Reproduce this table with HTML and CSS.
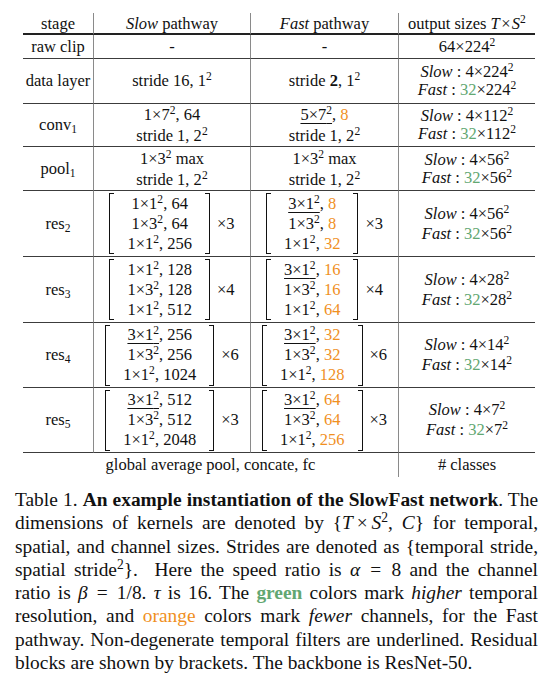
FILE: index.html
```html
<!DOCTYPE html>
<html lang="en">
<head>
    <meta charset="UTF-8">
    <meta name="viewport" content="width=device-width, initial-scale=1.0">
    <title>SlowFast Table 1</title>
    <link rel="stylesheet" href="styles.css">
</head>
<body>
    <div class="tbl">
        <!-- header -->
        <div class="c head"><span>stage</span></div>
        <div class="c head v"><span><i>Slow</i> pathway</span></div>
        <div class="c head v"><span><i>Fast</i> pathway</span></div>
        <div class="c head v"><span>output sizes <i>T</i>&#8202;×&#8202;<i>S</i><sup>2</sup></span></div>

        <!-- raw clip -->
        <div class="c"><span>raw clip</span></div>
        <div class="c v"><span>-</span></div>
        <div class="c v"><span>-</span></div>
        <div class="c v"><span>64×224<sup>2</sup></span></div>

        <!-- data layer -->
        <div class="c"><span>data layer</span></div>
        <div class="c v"><span>stride 16, 1<sup>2</sup></span></div>
        <div class="c v"><span>stride <b>2</b>, 1<sup>2</sup></span></div>
        <div class="c v out">
            <div><i>Slow</i> : 4×224<sup>2</sup></div>
            <div><i>Fast</i> : <span class="g">32</span>×224<sup>2</sup></div>
        </div>

        <!-- conv1 -->
        <div class="c"><span>conv<sub>1</sub></span></div>
        <div class="c v two">
            <div>1×7<sup>2</sup>, 64</div>
            <div>stride 1, 2<sup>2</sup></div>
        </div>
        <div class="c v two">
            <div><span class="ul">5×7<sup>2</sup></span>, <span class="o">8</span></div>
            <div>stride 1, 2<sup>2</sup></div>
        </div>
        <div class="c v out">
            <div><i>Slow</i> : 4×112<sup>2</sup></div>
            <div><i>Fast</i> : <span class="g">32</span>×112<sup>2</sup></div>
        </div>

        <!-- pool1 -->
        <div class="c"><span>pool<sub>1</sub></span></div>
        <div class="c v two">
            <div>1×3<sup>2</sup> max</div>
            <div>stride 1, 2<sup>2</sup></div>
        </div>
        <div class="c v two">
            <div>1×3<sup>2</sup> max</div>
            <div>stride 1, 2<sup>2</sup></div>
        </div>
        <div class="c v out">
            <div><i>Slow</i> : 4×56<sup>2</sup></div>
            <div><i>Fast</i> : <span class="g">32</span>×56<sup>2</sup></div>
        </div>

        <!-- res2 -->
        <div class="c"><span>res<sub>2</sub></span></div>
        <div class="c v">
            <div class="blk">
                <span class="brk left"></span>
                <div class="lines">
                    <div>1×1<sup>2</sup>, 64</div>
                    <div>1×3<sup>2</sup>, 64</div>
                    <div>1×1<sup>2</sup>, 256</div>
                </div>
                <span class="brk right"></span>
                <span class="rep">×3</span>
            </div>
        </div>
        <div class="c v">
            <div class="blk">
                <span class="brk left"></span>
                <div class="lines">
                    <div><span class="ul">3×1<sup>2</sup></span>, <span class="o">8</span></div>
                    <div>1×3<sup>2</sup>, <span class="o">8</span></div>
                    <div>1×1<sup>2</sup>, <span class="o">32</span></div>
                </div>
                <span class="brk right"></span>
                <span class="rep">×3</span>
            </div>
        </div>
        <div class="c v out res">
            <div><i>Slow</i> : 4×56<sup>2</sup></div>
            <div><i>Fast</i> : <span class="g">32</span>×56<sup>2</sup></div>
        </div>

        <!-- res3 -->
        <div class="c"><span>res<sub>3</sub></span></div>
        <div class="c v">
            <div class="blk">
                <span class="brk left"></span>
                <div class="lines">
                    <div>1×1<sup>2</sup>, 128</div>
                    <div>1×3<sup>2</sup>, 128</div>
                    <div>1×1<sup>2</sup>, 512</div>
                </div>
                <span class="brk right"></span>
                <span class="rep">×4</span>
            </div>
        </div>
        <div class="c v">
            <div class="blk">
                <span class="brk left"></span>
                <div class="lines">
                    <div><span class="ul">3×1<sup>2</sup></span>, <span class="o">16</span></div>
                    <div>1×3<sup>2</sup>, <span class="o">16</span></div>
                    <div>1×1<sup>2</sup>, <span class="o">64</span></div>
                </div>
                <span class="brk right"></span>
                <span class="rep">×4</span>
            </div>
        </div>
        <div class="c v out res">
            <div><i>Slow</i> : 4×28<sup>2</sup></div>
            <div><i>Fast</i> : <span class="g">32</span>×28<sup>2</sup></div>
        </div>

        <!-- res4 -->
        <div class="c"><span>res<sub>4</sub></span></div>
        <div class="c v">
            <div class="blk">
                <span class="brk left"></span>
                <div class="lines">
                    <div><span class="ul">3×1<sup>2</sup></span>, 256</div>
                    <div>1×3<sup>2</sup>, 256</div>
                    <div>1×1<sup>2</sup>, 1024</div>
                </div>
                <span class="brk right"></span>
                <span class="rep">×6</span>
            </div>
        </div>
        <div class="c v">
            <div class="blk">
                <span class="brk left"></span>
                <div class="lines">
                    <div><span class="ul">3×1<sup>2</sup></span>, <span class="o">32</span></div>
                    <div>1×3<sup>2</sup>, <span class="o">32</span></div>
                    <div>1×1<sup>2</sup>, <span class="o">128</span></div>
                </div>
                <span class="brk right"></span>
                <span class="rep">×6</span>
            </div>
        </div>
        <div class="c v out res">
            <div><i>Slow</i> : 4×14<sup>2</sup></div>
            <div><i>Fast</i> : <span class="g">32</span>×14<sup>2</sup></div>
        </div>

        <!-- res5 -->
        <div class="c"><span>res<sub>5</sub></span></div>
        <div class="c v">
            <div class="blk">
                <span class="brk left"></span>
                <div class="lines">
                    <div><span class="ul">3×1<sup>2</sup></span>, 512</div>
                    <div>1×3<sup>2</sup>, 512</div>
                    <div>1×1<sup>2</sup>, 2048</div>
                </div>
                <span class="brk right"></span>
                <span class="rep">×3</span>
            </div>
        </div>
        <div class="c v">
            <div class="blk">
                <span class="brk left"></span>
                <div class="lines">
                    <div><span class="ul">3×1<sup>2</sup></span>, <span class="o">64</span></div>
                    <div>1×3<sup>2</sup>, <span class="o">64</span></div>
                    <div>1×1<sup>2</sup>, <span class="o">256</span></div>
                </div>
                <span class="brk right"></span>
                <span class="rep">×3</span>
            </div>
        </div>
        <div class="c v out res">
            <div><i>Slow</i> : 4×7<sup>2</sup></div>
            <div><i>Fast</i> : <span class="g">32</span>×7<sup>2</sup></div>
        </div>

        <!-- last row -->
        <div class="c last wide"><span>global average pool, concate, fc</span></div>
        <div class="c last v"><span># classes</span></div>
    </div>

    <p class="caption">
        <span class="ln">Table 1. <b>An example instantiation of the SlowFast network</b>. The</span>
        <span class="ln">dimensions of kernels are denoted by {<i>T</i>&#8201;×&#8201;<i>S</i><sup>2</sup>, <i>C</i>} for temporal,</span>
        <span class="ln">spatial, and channel sizes. Strides are denoted as {temporal stride,</span>
        <span class="ln">spatial stride<sup>2</sup>}. &nbsp;Here the speed ratio is <i>α</i> <span class="eq">=</span> 8 and the channel</span>
        <span class="ln">ratio is <i>β</i> <span class="eq">=</span> 1/8. <i>τ</i> is 16. The <b class="g">green</b> colors mark <i>higher</i> temporal</span>
        <span class="ln">resolution, and <span class="o">orange</span> colors mark <i>fewer</i> channels, for the Fast</span>
        <span class="ln">pathway. Non-degenerate temporal filters are underlined. Residual</span>
        <span class="ln end">blocks are shown by brackets. The backbone is ResNet-50.</span>
    </p>
</body>
</html>
```

FILE: styles.css
```css
body {
    margin: 0;
    background: #fff;
    color: #111;
    font-family: "Liberation Serif", "Times New Roman", serif;
}

sup {
    font-size: 0.7em;
    line-height: 0;
    vertical-align: 0.5em;
}

sub {
    font-size: 0.7em;
    line-height: 0;
    vertical-align: -0.3em;
}

.g {
    color: #62a772;
}

.o {
    color: #f0901f;
}

/* table */
.tbl {
    display: grid;
    grid-template-columns: 70px 157px 148px 137px;
    grid-template-rows: 22px 24px 45px 43px 44px 66px 66px 65px 65px 24px;
    width: 512px;
    margin: 13px 0 0 23px;
    font-size: 16.5px;
    line-height: 20px;
}

.c {
    display: flex;
    flex-direction: column;
    align-items: center;
    justify-content: center;
    text-align: center;
    white-space: nowrap;
    border-bottom: 1px solid #3c3c3c;
}

.c.v {
    border-left: 1px solid #8a8a8a;
}

.c.head {
    border-bottom: 2px solid #222;
    padding-top: 1px;
}

.c.two {
    line-height: 21px;
}

.c.out {
    line-height: 18px;
}

.c.out.res {
    line-height: 20px;
}

.c.last {
    border-bottom: none;
}

.c.wide {
    grid-column: span 3;
}

.ul {
    text-decoration: underline;
    text-decoration-thickness: 1px;
    text-underline-offset: 3px;
}

/* residual block with brackets */
.blk {
    display: flex;
    align-items: center;
}

.brk {
    width: 4px;
    height: 59px;
    border: 1.5px solid #111;
}

.brk.left {
    border-right: none;
}

.brk.right {
    border-left: none;
}

.lines {
    padding: 0 13px;
    text-align: center;
}

.rep {
    margin-left: 7px;
}

/* caption */
.caption {
    margin: 11px 6px 0 15px;
    font-size: 19.4px;
    line-height: 23.3px;
}

.caption .ln {
    display: block;
    white-space: nowrap;
    text-align: justify;
    text-align-last: justify;
}

.caption .ln.end {
    text-align-last: left;
}

.caption .eq {
    margin: 0 0.1em;
}
```
